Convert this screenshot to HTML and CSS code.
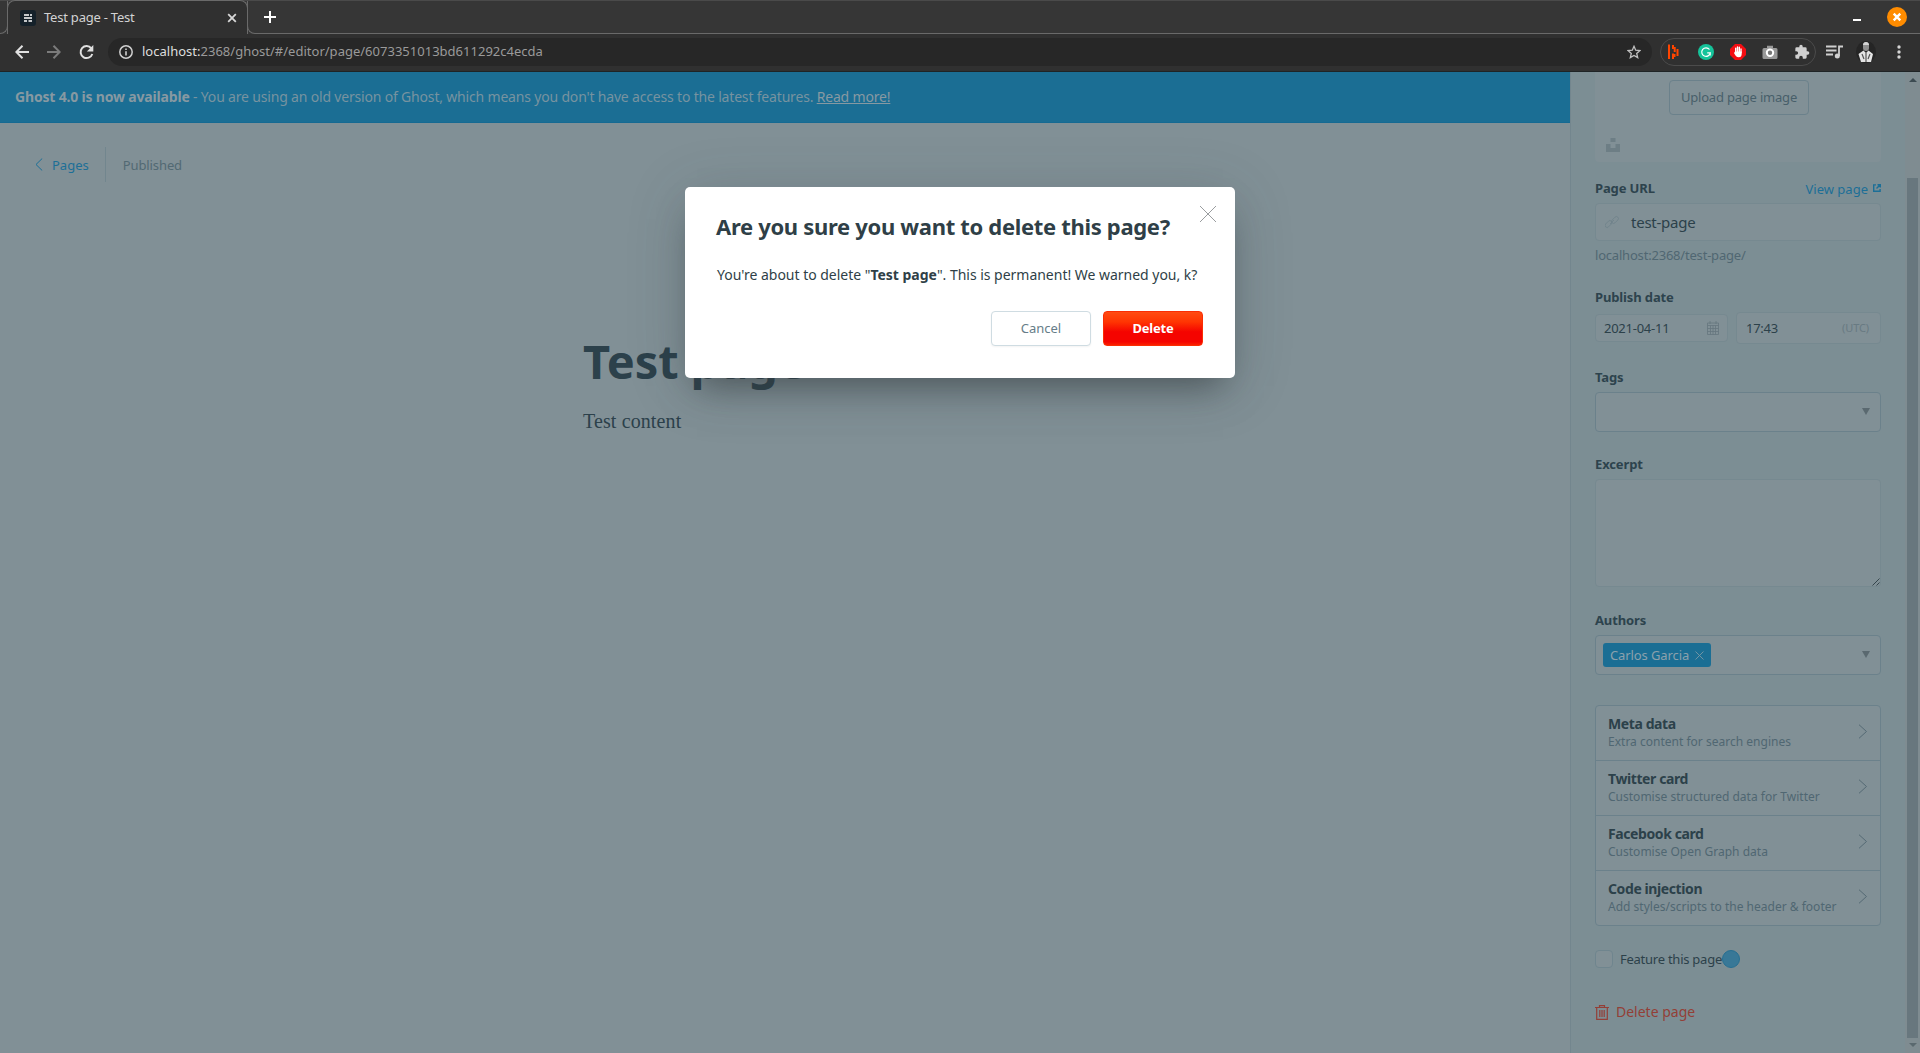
FILE: index.html
```html
<!DOCTYPE html>
<html lang="en">
<head>
<meta charset="utf-8">
<title>Test page - Test</title>
<link rel="stylesheet" href="styles.css">
</head>
<body>
<header class="browser">
  <div class="tabstrip">
    <div class="tab-edge"></div>
    <div class="tab">
      <svg class="favicon" width="16" height="16" viewBox="0 0 16 16"><rect width="16" height="16" rx="3" fill="#15212a"/><path d="M4 5h5M10 5h2M4 8h8M4 11h3M8.500 11H12" stroke="#fff" stroke-width="1.700"/></svg>
      <span class="tab-title">Test page - Test</span>
      <svg width="10" height="10" viewBox="0 0 10 10"><path d="M1.200 1.200l7.600 7.600M8.800 1.200L1.200 8.800" stroke="#d8d8d8" stroke-width="1.800"/></svg>
    </div>
    <div class="tab-rest">
      <svg class="plus" width="12" height="12" viewBox="0 0 12 12"><path d="M6 0v12M0 6h12" stroke="#fff" stroke-width="2"/></svg>
      <span class="minimize"></span>
      <svg class="close-window" width="20" height="20" viewBox="0 0 20 20"><circle cx="10" cy="10" r="10" fill="#ff8c00"/><path d="M6.700 6.700l6.600 6.600M13.300 6.700l-6.600 6.600" stroke="#fff" stroke-width="2.400"/></svg>
    </div>
  </div>
  <div class="toolbar">
    <svg class="nav" width="14" height="14" viewBox="0 0 14 14" fill="none" stroke="#e0e0e0" stroke-width="2"><path d="M14 7H1.500M7.500.700L1.300 7l6.200 6.300"/></svg>
    <svg class="nav" width="14" height="14" viewBox="0 0 14 14" fill="none" stroke="#7b7b7b" stroke-width="2"><path d="M0 7h12.500M6.500.700L12.700 7l-6.200 6.300"/></svg>
    <svg class="nav" width="15" height="15" viewBox="0 0 15 15"><path d="M12.300 3.300A6 6 0 1 0 13.300 9" fill="none" stroke="#e0e0e0" stroke-width="2"/><path d="M14.300 0v6.500H7.800z" fill="#e0e0e0"/></svg>
    <div class="omnibox">
      <svg width="14" height="14" viewBox="0 0 14 14"><circle cx="7" cy="7" r="6.200" fill="none" stroke="#d0d0d0" stroke-width="1.500"/><path d="M7 6.200v4.300M7 3.500v1.500" stroke="#d0d0d0" stroke-width="1.600"/></svg>
      <span class="url"><b>localhost:</b>2368/ghost/#/editor/page/6073351013bd611292c4ecda</span>
      <svg width="14" height="14" viewBox="0 0 14 14"><path d="M7 1.300l1.700 3.900 4.200.4-3.200 2.800 1 4.200L7 10.400l-3.700 2.200 1-4.200L1.100 5.600l4.200-.4z" fill="none" stroke="#c0c0c0" stroke-width="1.300"/></svg>
    </div>
    <div class="extensions">
      <svg width="16" height="16" viewBox="0 0 16 16" stroke="#ff4500" stroke-width="2"><path d="M3 .500v14.500M7 1v4M7 9.500v5.500M8.700 3v5M11.500 5v7M8.500 10v3"/></svg>
      <svg width="16" height="16" viewBox="0 0 16 16"><circle cx="8" cy="8" r="8" fill="#15c39a"/><path d="M11.500 5.500A4.300 4.300 0 1 0 12.300 8.800H9.200M12.200 8.800v2.700" fill="none" stroke="#fff" stroke-width="1.200"/></svg>
      <svg width="16" height="16" viewBox="0 0 16 16"><path d="M5 0h6l5 5v6l-5 5H5l-5-5V5z" fill="#f40d12"/><path d="M5.700 8V4.300M7.500 8V2.900M9.300 8V3.300M11 8.500V5" stroke="#fff" stroke-width="1.400" stroke-linecap="round"/><path d="M5 7.500h6.700v2.500c0 2-1 3.300-3 3.300-2.300 0-3-1.300-4.700-4.300z" fill="#fff"/></svg>
      <svg width="16" height="16" viewBox="0 0 16 16"><path d="M2 4h3V1.700h6V4h3a1.500 1.500 0 0 1 1.500 1.500v8A1.500 1.500 0 0 1 14 15H2a1.500 1.500 0 0 1-1.500-1.500v-8A1.500 1.500 0 0 1 2 4z" fill="#999"/><circle cx="8" cy="8.800" r="3.200" fill="#777" stroke="#fff" stroke-width="2"/></svg>
      <svg width="16" height="16" viewBox="0 0 24 24"><path d="M20.500 11H19V7a2 2 0 0 0-2-2h-4V3.500a2.500 2.500 0 0 0-5 0V5H4a2 2 0 0 0-2 2v3.800h1.500a2.700 2.700 0 0 1 0 5.400H2V20a2 2 0 0 0 2 2h3.800v-1.500a2.700 2.700 0 0 1 5.400 0V22H17a2 2 0 0 0 2-2v-4h1.500a2.500 2.500 0 0 0 0-5z" fill="#cfcfcf"/></svg>
    </div>
    <svg class="queue" width="17" height="14" viewBox="0 0 17 14"><path d="M0 1.500h10.500M0 5.500h10.500M0 9.500h7M13 11V1.500h4" stroke="#cfcfcf" stroke-width="1.800" fill="none"/><circle cx="11.300" cy="11" r="2.500" fill="#cfcfcf"/></svg>
    <svg class="avatar" width="20" height="22" viewBox="0 0 20 22"><ellipse cx="10" cy="11" rx="10" ry="11" fill="#252525"/><path d="M7 4c0-4 6-4 6 0v3c0 2-1 3-3 3S7 9 7 7z" fill="#8e8e8e"/><path d="M7 4c0-4 6-4 6 0z" fill="#d4d4d4"/><path d="M7.500 9.500L10 12l2.500-2.500L17 13l-2 8H5L2.500 13z" fill="#e5e5e5"/><path d="M10 12v9M6 13l2 5M14 13l-2 5" stroke="#555" stroke-width="1.200"/></svg>
    <svg class="dots" width="4" height="14" viewBox="0 0 4 14" fill="#d5d5d5"><circle cx="2" cy="2" r="1.700"/><circle cx="2" cy="7" r="1.700"/><circle cx="2" cy="12" r="1.700"/></svg>
  </div>
</header>

<div class="page">
  <main class="editor">
    <div class="banner"><p><b>Ghost 4.0 is now available</b> - You are using an old version of Ghost, which means you don't have access to the latest features. <a>Read more!</a></p></div>
    <div class="crumbs">
      <svg width="8" height="13" viewBox="0 0 8 13"><path d="M7.200.500L1 6.500l6.200 6" fill="none" stroke="#1c6f97"/></svg>
      <a class="back">Pages</a>
      <span class="status">Published</span>
    </div>
    <article class="post">
      <h1>Test page</h1>
      <p>Test content</p>
    </article>
  </main>

  <aside class="settings">
    <div class="image-card">
      <span class="upload">Upload page image</span>
      <svg width="14" height="14" viewBox="0 0 14 14" fill="#6d7e85"><path d="M4.500 0h5v4h-5zM0 6h4.500v4h5V6H14v8H0z"/></svg>
    </div>

    <div class="label url-label"><span>Page URL</span>
      <a class="view">View page <svg width="8" height="8" viewBox="0 0 8 8" fill="none" stroke="#1c6f97" stroke-width="1.400"><path d="M3 .9H.7v6.400h6.400V5M4.500.7h2.800v2.800M7.200.8L3.500 4.500"/></svg></a>
    </div>
    <div class="input slug">
      <svg width="14" height="14" viewBox="0 0 14 14" fill="none" stroke="#6f828a" stroke-width=".8"><rect x="-.5" y="7" width="8" height="4" rx="2" transform="rotate(-45 3.500 9)"/><rect x="6" y="3" width="8" height="4" rx="2" transform="rotate(-45 10 5)"/><path d="M5 9l4-4"/></svg>
      <span>test-page</span>
    </div>
    <p class="hint">localhost:2368/test-page/</p>

    <div class="label date-label">Publish date</div>
    <div class="datetime">
      <div class="input date"><span>2021-04-11</span>
        <svg width="12" height="14" viewBox="0 0 12 14" fill="none" stroke="#66767d" stroke-width=".8"><path d="M.5 2h11v11.500H.5zM.5 4.500h11M.5 7.500h11M.5 10.500h11M3.500 4.500v9M6 4.500v9M8.500 4.500v9M3 0v3M9 0v3"/></svg></div>
      <div class="input time"><span>17:43</span><small>(UTC)</small></div>
    </div>

    <div class="label tags-label">Tags</div>
    <div class="select"><i class="caret"></i></div>

    <div class="label excerpt-label">Excerpt</div>
    <div class="input excerpt"><svg width="8" height="8" viewBox="0 0 8 8"><path d="M.5 7.500l7-7M4.500 7.500l3-3" stroke="#2b3c44" stroke-width=".9"/></svg></div>

    <div class="label authors-label">Authors</div>
    <div class="select">
      <span class="token">Carlos Garcia<svg width="9" height="9" viewBox="0 0 9 9"><path d="M.5.5l8 8M8.500.5l-8 8" stroke="#7a98a5" stroke-width=".9"/></svg></span>
      <i class="caret"></i>
    </div>

    <ul class="panels">
      <li><div><strong>Meta data</strong><span>Extra content for search engines</span></div><svg width="10" height="15" viewBox="0 0 10 15"><path d="M1 .700l7.500 6.800L1 14.300" fill="none" stroke="#556a74"/></svg></li>
      <li><div><strong>Twitter card</strong><span>Customise structured data for Twitter</span></div><svg width="10" height="15" viewBox="0 0 10 15"><path d="M1 .700l7.500 6.800L1 14.300" fill="none" stroke="#556a74"/></svg></li>
      <li><div><strong>Facebook card</strong><span>Customise Open Graph data</span></div><svg width="10" height="15" viewBox="0 0 10 15"><path d="M1 .700l7.500 6.800L1 14.300" fill="none" stroke="#556a74"/></svg></li>
      <li><div><strong>Code injection</strong><span>Add styles/scripts to the header &amp; footer</span></div><svg width="10" height="15" viewBox="0 0 10 15"><path d="M1 .700l7.500 6.800L1 14.300" fill="none" stroke="#556a74"/></svg></li>
    </ul>

    <div class="feature"><i class="checkbox"></i><span>Feature this page</span><i class="beacon"></i></div>
    <div class="delete-page">
      <svg width="14" height="15" viewBox="0 0 14 15" fill="none" stroke="#933f37" stroke-width="1.200"><path d="M0 2.500h14M4.500 2.300V.6h5v1.700M1.700 2.500v11.800h10.600V2.500M4.800 5v7M7 5v7M9.200 5v7"/></svg>
      <span>Delete page</span>
    </div>
  </aside>

  <div class="scrollbar"><i class="arrow-up"></i><i class="thumb"></i><i class="arrow-down"></i></div>
</div>

<div class="modal" role="dialog">
  <h2>Are you sure you want to delete this page?</h2>
  <svg class="modal-close" width="18" height="18" viewBox="0 0 18 18"><path d="M1 1l16 16M17 1L1 17" stroke="#8f9294" stroke-width=".9"/></svg>
  <p>You're about to delete "<b>Test page</b>". This is permanent! We warned you, k?</p>
  <div class="actions"><button class="cancel">Cancel</button><button class="delete">Delete</button></div>
</div>
</body>
</html>
```
FILE: styles.css
```css
* { box-sizing: border-box; }
body {
  margin: 0;
  width: 1920px;
  height: 1053px;
  overflow: hidden;
  position: relative;
  font-family: "Noto Sans", "Open Sans", sans-serif;
  font-size: 13px;
  line-height: 20px;
  color: #2c414a;
  display: flex;
  flex-direction: column;
}
h1, h2, p, ul { margin: 0; padding: 0; }
svg { display: block; flex: none; }
i { flex: none; }

/* browser chrome */
.browser { height: 72px; background: #303030; border-bottom: 1px solid #1f2426; }
.tabstrip { height: 34px; display: flex; background: #363636; border-top: 1px solid #4a4a4a; }
.tab-edge { width: 8px; border-bottom: 1px solid #6a6a6a; border-right: 1px solid #6a6a6a; border-bottom-right-radius: 8px; margin-right: -1px; }
.tab {
  width: 241px;
  margin-top: -1px;
  height: 34px;
  padding: 0 10px 0 12px;
  display: flex;
  align-items: center;
  background: #303030;
  border: 1px solid #6a6a6a;
  border-bottom: 0;
  border-radius: 8px 8px 0 0;
}
.tab-title { flex: 1; margin-left: 8px; letter-spacing: -.22px; color: #d3d3d3; margin-top: -2px; }
.tab-rest { flex: 1; display: flex; align-items: center; border-bottom: 1px solid #6a6a6a; border-left: 1px solid #6a6a6a; border-bottom-left-radius: 8px; margin-left: -1px; }
.plus { margin-left: 16px; }
.minimize { width: 8px; height: 2px; margin: 6px 26px 0 auto; background: #fff; }
.close-window { margin-right: 13px; }

.toolbar { height: 36px; display: flex; align-items: center; padding: 0 0 0 15px; }
.nav { margin-right: 18px; }
.nav + .nav + .nav { margin-right: 14px; }
.omnibox {
  width: 1544px;
  height: 28px;
  border-radius: 14px;
  background: #272727;
  padding: 0 11px;
  display: flex;
  align-items: center;
}
.url { flex: 1; margin: -2px 0 0 9px; letter-spacing: .01px; color: #9a9a9a; }
.url b { font-weight: 400; color: #dedede; }
.extensions {
  width: 156px;
  height: 28px;
  margin-left: 8px;
  padding: 0 5px;
  border: 1px solid #4b4b4b;
  border-radius: 14px;
  display: flex;
  align-items: center;
  justify-content: space-between;
}
.queue { margin-left: 10px; }
.avatar { margin-left: 13px; }
.dots { margin-left: 21px; }

/* workspace */
.page { flex: 1; display: flex; background: #819096; }
.editor { width: 1570px; display: flex; flex-direction: column; }
.banner {
  height: 51px;
  padding: 0 15px;
  display: flex;
  align-items: center;
  background: #1b6e94;
  border-bottom: 1px solid #166a92;
  font-size: 14px;
  letter-spacing: -.18px;
  color: #7793a0;
}
.banner b { color: #8799a2; }
.banner a { color: #8799a2; text-decoration: underline; }
.crumbs { height: 35px; margin: 24px 0 0 35px; display: flex; align-items: center; }
.back {
  height: 35px;
  margin-left: 9px;
  padding-right: 16px;
  border-right: 1px solid #72868e;
  line-height: 36px;
  color: #1c6f97;
}
.status { margin-left: 17px; color: #526973; letter-spacing: -.1px; }
.post { width: 740px; margin: 147px 0 0 583px; color: #2c414b; }
.post h1 { font-size: 47px; line-height: 64px; letter-spacing: -.1px; }
.post p { margin-top: 13px; font: 20px/30px "Liberation Serif", serif; letter-spacing: .12px; }

/* settings */
.settings { width: 335px; padding: 0 24px; border-left: 1px solid #73868e; background: #7c8e94; }
.image-card {
  height: 90px;
  padding-top: 8px;
  border-radius: 0 0 4px 4px;
  background: #819096;
}
.upload {
  display: block;
  width: 140px;
  height: 35px;
  margin: 0 0 0 74px;
  border: 1px solid #6b818b;
  border-radius: 4px;
  line-height: 33px;
  text-align: center;
  letter-spacing: -.2px;
  color: #485f6a;
}
.image-card svg { margin: 23px 0 0 11px; }
.label { height: 20px; margin-bottom: 5px; font-weight: 700; letter-spacing: -.13px; color: #2d434d; }
.url-label { display: flex; justify-content: space-between; margin-top: 16px; }
.view { display: flex; align-items: center; gap: 5px; margin-top: 1px; font-weight: 400; letter-spacing: 0; color: #1c6f97; }
.view svg { margin-top: -1px; }
.input { display: flex; align-items: center; background: #819096; border: 1px solid #768990; border-radius: 4px; }
.slug { height: 38px; padding-left: 9px; font-size: 15px; letter-spacing: -.25px; }
.slug span { margin-left: 12px; }
.hint { height: 20px; margin-top: 4px; letter-spacing: -.2px; color: #506772; }
.date-label { margin-top: 22px; }
.datetime { display: flex; align-items: center; justify-content: space-between; letter-spacing: -.25px; }
.date { width: 133px; height: 28px; padding: 0 8px; justify-content: space-between; }
.time { width: 145px; height: 32px; padding: 0 11px 0 9px; justify-content: space-between; }
.time small { font-size: 11px; letter-spacing: -.1px; color: #687a82; }
.tags-label { margin-top: 23px; }
.select {
  height: 40px;
  padding: 0 10px 0 7px;
  display: flex;
  align-items: center;
  background: #819096;
  border: 1px solid #6b818b;
  border-radius: 4px;
}
.caret { margin-left: auto; margin-top: -2px; border: 4px solid transparent; border-top: 7px solid #5a6970; border-bottom: 0; }
.excerpt-label { margin-top: 22px; }
.excerpt { height: 108px; justify-content: flex-end; align-items: flex-end; }
.authors-label { margin-top: 23px; }
.token {
  height: 24px;
  padding: 0 7px;
  display: flex;
  align-items: center;
  gap: 6px;
  border-radius: 3px;
  background: #1b6e94;
  color: #8ba1ac;
  letter-spacing: -.1px;
}
.panels { margin-top: 30px; list-style: none; background: #819096; border: 1px solid #6b818b; border-radius: 4px; }
.panels li { height: 55px; padding: 0 12px 1px; display: flex; align-items: center; justify-content: space-between; }
.panels li + li { border-top: 1px solid #6b818b; }
.panels li:first-child { height: 54px; }
.panels strong, .panels span { display: block; height: 18px; line-height: 18px; }
.panels strong { font-size: 14px; letter-spacing: -.4px; }
.panels span { font-size: 12px; letter-spacing: .01px; color: #506772; }
.panels svg { margin-top: -3px; }
.feature { height: 18px; margin-top: 24px; display: flex; align-items: center; }
.checkbox { width: 18px; height: 18px; border: 1px solid #6f858e; border-radius: 4px; background: #819096; }
.feature span { margin-left: 7px; letter-spacing: -.25px; }
.beacon { width: 18px; height: 18px; border: 1px solid #266f92; border-radius: 50%; background: #387897; }
.delete-page { height: 20px; margin-top: 34px; display: flex; align-items: center; gap: 7px; font-size: 14px; color: #933f37; }

.scrollbar { width: 15px; padding: 6px 0 5px; display: flex; flex-direction: column; align-items: center; background: #7f8c91; }
.arrow-up { border: 4px solid transparent; border-bottom-color: #3c4b52; border-top: 0; }
.thumb { width: 11px; height: 860px; margin-top: 96px; background: #68777e; }
.arrow-down { margin-top: 5px; border: 4px solid transparent; border-top-color: #5a696f; border-bottom: 0; }

/* confirmation dialog */
.modal {
  position: absolute;
  left: 685px;
  top: 187px;
  width: 550px;
  height: 191px;
  padding: 23px 32px 0 31px;
  border-radius: 5px;
  background: #fff;
  color: #2f3f47;
  box-shadow: 0 20px 34px -12px rgba(50, 58, 62, .62), 0 8px 60px rgba(60, 72, 78, .18);
}
.modal h2 { font-size: 22px; line-height: 32px; letter-spacing: -.32px; white-space: nowrap; }
.modal p { margin: 23px 0 0 1px; font-size: 14px; line-height: 20px; letter-spacing: -.02px; white-space: nowrap; }
.modal-close { position: absolute; right: 18px; top: 18px; }
.actions { margin-top: 26px; display: flex; justify-content: flex-end; gap: 12px; }
.actions button { width: 100px; height: 35px; padding: 0 0 2px; border-radius: 4px; font: inherit; }
.cancel { border: 1px solid #cfdce2; background: #fff; color: #667d88; box-shadow: 0 1px 2px rgba(0, 0, 0, .05); }
.actions .delete {
  border: 1px solid #fa2d04;
  background: linear-gradient(#ff4b12, #ff3502 30%, #f50400 60%, #f50400 90%, #fa2000);
  color: #fff;
  font-weight: 700;
  letter-spacing: -.2px;
}
```
